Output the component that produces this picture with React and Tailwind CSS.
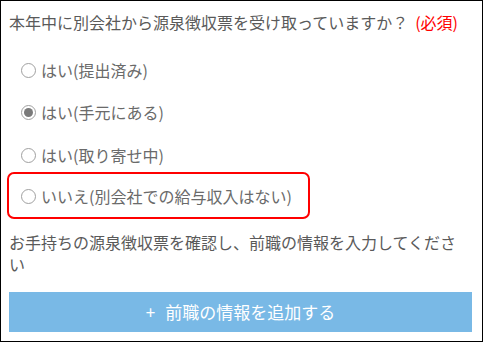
import React, { useState } from 'react';

const options = [
    { value: 'submitted', label: 'はい(提出済み)' },
    { value: 'have', label: 'はい(手元にある)' },
    { value: 'ordering', label: 'はい(取り寄せ中)' },
];

function Radio({ checked }) {
    return (
        <span className="flex h-[15px] w-[15px] shrink-0 items-center justify-center rounded-full border border-[#a0a0a0] bg-white">
            {checked && <span className="h-[9px] w-[9px] rounded-full bg-[#7a7a7a]" />}
        </span>
    );
}

function Option({ label, checked, onClick }) {
    return (
        <label
            className="flex h-[22px] cursor-pointer items-center gap-[5px] pl-[12px] text-[16px] leading-[22px] text-[#6a6a6a]"
            onClick={onClick}
        >
            <Radio checked={checked} />
            <span>{label}</span>
        </label>
    );
}

export default function App() {
    const [selected, setSelected] = useState('have');

    return (
        <div
            className="flex h-[342px] w-[483px] flex-col border border-black bg-white pl-2 pr-[10px] pt-[10px]"
            style={{ fontFamily: '"Noto Sans CJK JP", "Noto Sans", sans-serif' }}
        >
            <div className="text-[16px] leading-[22px] text-[#5a5a5a]">
                本年中に別会社から源泉徴収票を受け取っていますか？
                <span className="ml-[7px] text-[#ff0000]">(必須)</span>
            </div>

            <div className="mt-[26px] flex flex-col">
                <Option
                    label={options[0].label}
                    checked={selected === options[0].value}
                    onClick={() => setSelected(options[0].value)}
                />
                <div className="mt-[20px]">
                    <Option
                        label={options[1].label}
                        checked={selected === options[1].value}
                        onClick={() => setSelected(options[1].value)}
                    />
                </div>
                <div className="mt-[21px]">
                    <Option
                        label={options[2].label}
                        checked={selected === options[2].value}
                        onClick={() => setSelected(options[2].value)}
                    />
                </div>
                <div className="ml-[-2px] mt-[6px] w-[303px] rounded-[7px] border-2 border-[#ff0000] pb-[10px] pt-[11px]">
                    <Option
                        label="いいえ(別会社での給与収入はない)"
                        checked={selected === 'none'}
                        onClick={() => setSelected('none')}
                    />
                </div>
            </div>

            <p className="mt-[12px] text-[16px] leading-[22px] text-[#5a5a5a]">
                お手持ちの源泉徴収票を確認し、前職の情報を入力してください
            </p>

            <button className="mt-[17px] flex h-[40px] w-full items-center justify-center gap-[10px] bg-[#79b9e6] text-[17px] text-white">
                <span>+</span>
                <span>前職の情報を追加する</span>
            </button>
        </div>
    );
}
